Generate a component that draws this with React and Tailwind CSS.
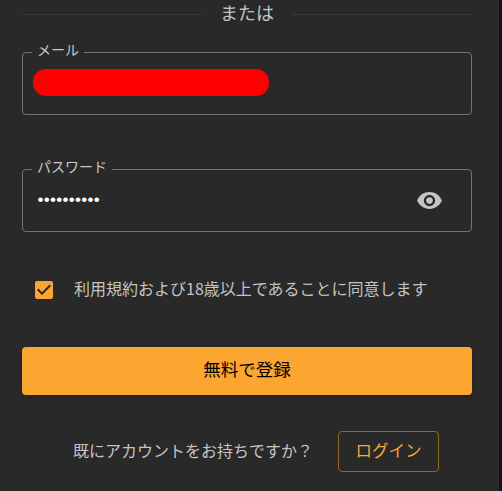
import React, { useState } from 'react';
import { MdCheckBox, MdCheckBoxOutlineBlank, MdVisibility, MdVisibilityOff } from 'react-icons/md';

function OutlinedField({ label, children }) {
  return (
    <fieldset className="h-[70px] w-full min-w-0 rounded-[4px] border border-[#737373] px-[9px]">
      <legend className="h-[14px] px-[5px] text-[14px] leading-[8px] whitespace-nowrap text-[#c8c8c8]">{label}</legend>
      <div className="flex h-[46px] items-center">{children}</div>
    </fieldset>
  );
}

export default function App() {
  const [agreed, setAgreed] = useState(true);
  const [showPassword, setShowPassword] = useState(false);

  return (
    <div className="h-[491px] w-[502px] overflow-hidden border-r-[3px] border-[#141414] bg-[#292929] pl-[22px] font-['Noto_Sans_CJK_JP',sans-serif] text-[#c4c4c4]">
      <div className="flex w-[450px] flex-col">
        <div className="flex h-[28px] items-center gap-[18px]">
          <div className="mt-px h-px flex-1 bg-[#3a3a3a]" />
          <span className="-mt-1 text-[18px] leading-[26px]">または</span>
          <div className="mt-px h-px flex-1 bg-[#3a3a3a]" />
        </div>

        <div className="mt-[17px]">
          <OutlinedField label="メール">
            <div className="ml-px h-[27px] w-[236px] rounded-[13px] bg-[#ff0000]" />
          </OutlinedField>
        </div>

        <div className="mt-[47px]">
          <OutlinedField label="パスワード">
            <span className="flex-1 pt-[2px] pl-[5.5px] font-['Liberation_Sans',sans-serif] text-[17px] leading-5 tracking-[0.3px] text-white">
              {showPassword ? '' : '••••••••••'}
            </span>
            <button className="mt-[3px] mr-[19px] text-[#c4c4c4]" onClick={() => setShowPassword(!showPassword)} aria-label="パスワードを表示">
              {showPassword ? <MdVisibilityOff className="h-[27px] w-[27px]" /> : <MdVisibility className="h-[27px] w-[27px]" />}
            </button>
          </OutlinedField>
        </div>

        <div className="mt-[46px] flex h-6 items-center pl-[10px]">
          <button className="text-[#fca530]" onClick={() => setAgreed(!agreed)} aria-label="同意">
            {agreed ? <MdCheckBox className="h-6 w-6" /> : <MdCheckBoxOutlineBlank className="h-6 w-6" />}
          </button>
          <span className="ml-[18px] pb-1 text-[16px] leading-6 whitespace-nowrap">利用規約および18歳以上であることに同意します</span>
        </div>

        <button className="mt-[45px] h-12 w-full rounded-[4px] bg-[#fca530] pb-1 text-[17.5px] leading-6 text-black shadow-md">
          無料で登録
        </button>

        <div className="mt-9 flex items-center pl-[51px]">
          <span className="w-[265px] pb-1 text-[16px] leading-6 whitespace-nowrap">既にアカウントをお持ちですか？</span>
          <button className="h-[41px] w-[101px] rounded-[4px] border border-[#926529] pb-1 text-[16.5px] leading-6 text-[#fca530]">
            ログイン
          </button>
        </div>
      </div>
    </div>
  );
}
